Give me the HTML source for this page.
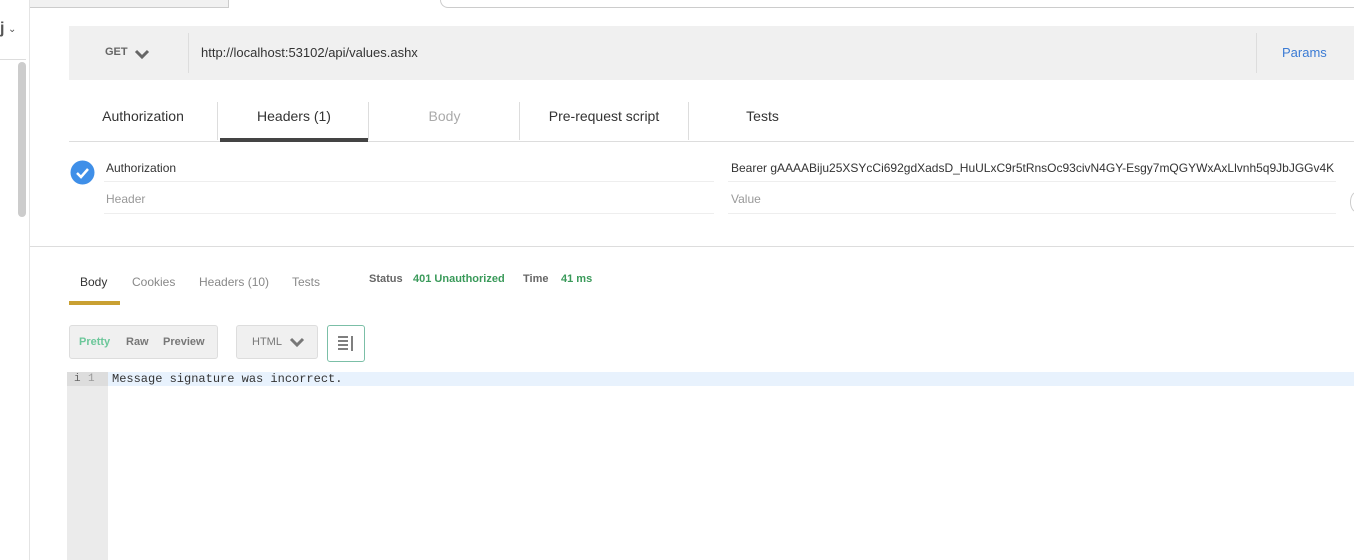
<!DOCTYPE html>
<html><head><style>
*{margin:0;padding:0;box-sizing:border-box}
body{width:1354px;height:560px;overflow:hidden;background:#fff;font-family:"Liberation Sans",sans-serif;position:relative;color:#333}
.a{position:absolute}
</style></head><body>
<!-- left sidebar -->
<div class="a" style="left:0;top:0;width:30px;height:560px;background:#fff;border-right:1px solid #e4e4e4"></div>
<div class="a" style="left:0;top:20px;font-size:16px;color:#555;font-weight:bold">j</div>
<div class="a" style="left:8px;top:24px;font-size:10px;color:#555">⌄</div>
<div class="a" style="left:0;top:59px;width:26px;height:1px;background:#ddd"></div>
<div class="a" style="left:18px;top:62px;width:8px;height:155px;background:#ccc;border-radius:4px"></div>
<!-- top tab -->
<div class="a" style="left:30px;top:0;width:199px;height:8px;background:#f1f1f1;border-bottom:1px solid #ccc;border-right:1px solid #ccc"></div>
<div class="a" style="left:440px;top:0;width:914px;height:8px;border-bottom:1px solid #ccc;border-left:1px solid #ccc;border-bottom-left-radius:8px"></div>
<!-- url bar -->
<div class="a" style="left:69px;top:26px;width:1285px;height:54px;background:#f0f0f0"></div>
<div class="a" style="left:105px;top:46px;font-size:11px;color:#666;font-weight:bold">GET</div>
<svg class="a" style="left:134px;top:48px" width="16" height="12"><path d="M2 3 L8 9 L14 3" stroke="#666" stroke-width="3" fill="none"/></svg>
<div class="a" style="left:188px;top:33px;width:1px;height:40px;background:#ddd"></div>
<div class="a" style="left:201px;top:45px;font-size:13px;color:#333">http://localhost:53102/api/values.ashx</div>
<div class="a" style="left:1256px;top:33px;width:1px;height:40px;background:#ddd"></div>
<div class="a" style="left:1282px;top:45px;font-size:13px;color:#3b7bd4">Params</div>
<!-- tabs -->
<div class="a" style="left:69px;top:141px;width:1285px;height:1px;background:#ddd"></div>
<div class="a" style="left:69px;top:108px;width:148px;text-align:center;font-size:14px">Authorization</div>
<div class="a" style="left:217px;top:102px;width:1px;height:38px;background:#ddd"></div>
<div class="a" style="left:220px;top:108px;width:148px;text-align:center;font-size:14px">Headers (1)</div>
<div class="a" style="left:220px;top:138px;width:148px;height:4px;background:#444"></div>
<div class="a" style="left:368px;top:102px;width:1px;height:38px;background:#ddd"></div>
<div class="a" style="left:370px;top:108px;width:149px;text-align:center;font-size:14px;color:#aaa">Body</div>
<div class="a" style="left:519px;top:102px;width:1px;height:38px;background:#ddd"></div>
<div class="a" style="left:520px;top:108px;width:168px;text-align:center;font-size:14px">Pre-request script</div>
<div class="a" style="left:688px;top:102px;width:1px;height:38px;background:#ddd"></div>
<div class="a" style="left:690px;top:108px;width:145px;text-align:center;font-size:14px">Tests</div>
<!-- header rows -->
<svg class="a" style="left:70px;top:160px" width="25" height="25"><circle cx="12.5" cy="12.5" r="12" fill="#3f8fe8"/><path d="M7 13 L11 17 L18 9" stroke="#fff" stroke-width="2.5" fill="none"/></svg>
<div class="a" style="left:106px;top:161px;font-size:12px">Authorization</div>
<div class="a" style="left:104px;top:181px;width:610px;height:1px;background:#eee"></div>
<div class="a" style="left:731px;top:161px;font-size:12px;white-space:nowrap">Bearer gAAAABiju25XSYcCi692gdXadsD_HuULxC9r5tRnsOc93civN4GY-Esgy7mQGYWxAxLlvnh5q9JbJGGv4K</div>
<div class="a" style="left:728px;top:181px;width:608px;height:1px;background:#eee"></div>
<div class="a" style="left:106px;top:192px;font-size:12px;color:#999">Header</div>
<div class="a" style="left:731px;top:192px;font-size:12px;color:#999">Value</div>
<div class="a" style="left:104px;top:213px;width:610px;height:1px;background:#eee"></div>
<div class="a" style="left:728px;top:213px;width:608px;height:1px;background:#eee"></div>
<div class="a" style="left:1350px;top:192px;width:12px;height:20px;border:1px solid #ccc;border-radius:50%"></div>
<div class="a" style="left:30px;top:246px;width:1324px;height:1px;background:#ddd"></div>
<!-- response tabs -->
<div class="a" style="left:80px;top:275px;font-size:12px;color:#333">Body</div>
<div class="a" style="left:69px;top:301px;width:51px;height:4px;background:#c9a032"></div>
<div class="a" style="left:132px;top:275px;font-size:12px;color:#888">Cookies</div>
<div class="a" style="left:199px;top:275px;font-size:12px;color:#888">Headers (10)</div>
<div class="a" style="left:292px;top:275px;font-size:12px;color:#888">Tests</div>
<div class="a" style="left:369px;top:273px;font-size:11px;font-weight:bold;color:#666">Status</div>
<div class="a" style="left:413px;top:273px;font-size:11px;font-weight:bold;color:#3a9a5a">401 Unauthorized</div>
<div class="a" style="left:523px;top:273px;font-size:11px;font-weight:bold;color:#666">Time</div>
<div class="a" style="left:561px;top:273px;font-size:11px;font-weight:bold;color:#3a9a5a">41 ms</div>
<!-- buttons -->
<div class="a" style="left:69px;top:325px;width:149px;height:34px;background:#f0f0f0;border:1px solid #ddd;border-radius:3px"></div>
<div class="a" style="left:79px;top:336px;font-size:11px;font-weight:bold;color:#6cc79a">Pretty</div>
<div class="a" style="left:126px;top:336px;font-size:11px;font-weight:bold;color:#777">Raw</div>
<div class="a" style="left:163px;top:336px;font-size:11px;font-weight:bold;color:#777">Preview</div>
<div class="a" style="left:236px;top:325px;width:82px;height:34px;background:#f0f0f0;border:1px solid #ddd;border-radius:3px"></div>
<div class="a" style="left:252px;top:336px;font-size:11px;color:#777">HTML</div>
<svg class="a" style="left:289px;top:337px" width="16" height="11"><path d="M2 2 L8 8 L14 2" stroke="#777" stroke-width="3" fill="none"/></svg>
<div class="a" style="left:327px;top:325px;width:38px;height:37px;border:1px solid #7bbfa7;border-radius:3px;background:#fff"></div>
<svg class="a" style="left:337px;top:335px" width="20" height="16"><path d="M1 2h10M1 6h10M1 10h10M1 14h10M15 1v15" stroke="#555" stroke-width="1.5"/></svg>
<!-- editor -->
<div class="a" style="left:67px;top:372px;width:41px;height:188px;background:#ebebeb"></div>
<div class="a" style="left:108px;top:372px;width:1246px;height:14px;background:#e8f2fd"></div>
<div class="a" style="left:67px;top:372px;width:41px;height:14px;background:#ddd"></div>
<div class="a" style="left:74px;top:373px;font-size:11px;font-family:'Liberation Mono',monospace;color:#666">i</div>
<div class="a" style="left:88px;top:373px;font-size:11px;font-family:'Liberation Mono',monospace;color:#999">1</div>
<div class="a" style="left:112px;top:372px;font-size:12px;font-family:'Liberation Mono',monospace;color:#333">Message signature was incorrect.</div>
</body></html>
